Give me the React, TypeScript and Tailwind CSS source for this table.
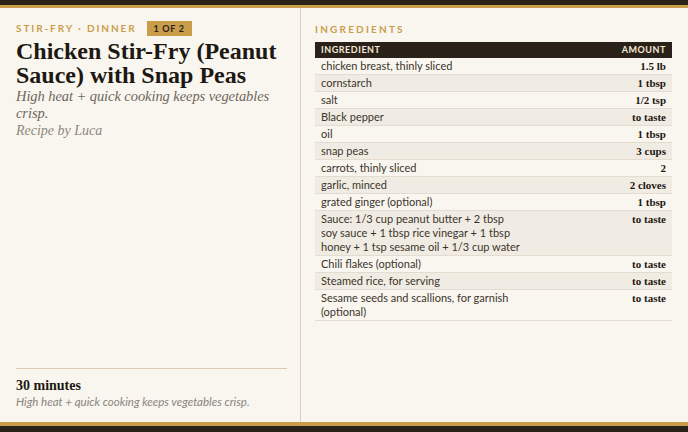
import React from 'react';

const ingredients: [string, string][] = [
  ['chicken breast, thinly sliced', '1.5 lb'],
  ['cornstarch', '1 tbsp'],
  ['salt', '1/2 tsp'],
  ['Black pepper', 'to taste'],
  ['oil', '1 tbsp'],
  ['snap peas', '3 cups'],
  ['carrots, thinly sliced', '2'],
  ['garlic, minced', '2 cloves'],
  ['grated ginger (optional)', '1 tbsp'],
  [
    'Sauce: 1/3 cup peanut butter + 2 tbsp soy sauce + 1 tbsp rice vinegar + 1 tbsp honey + 1 tsp sesame oil + 1/3 cup water',
    'to taste',
  ],
  ['Chili flakes (optional)', 'to taste'],
  ['Steamed rice, for serving', 'to taste'],
  ['Sesame seeds and scallions, for garnish (optional)', 'to taste'],
];

const serif = "font-['Liberation_Serif',serif]";
const sans = "font-['Lato',sans-serif]";

export default function App() {
  return (
    <div className="w-[688px] h-[432px] flex flex-col bg-[#f9f6f0] overflow-hidden">

      {/* TOP BARS */}
      <div className="h-[5px] bg-[#2a2118]" />
      <div className="h-[3px] bg-[#c99d4a]" />

      <div className="flex-1 flex min-h-0">

        {/* LEFT */}
        <div className="w-[301px] border-r border-[#d9d0c1] pl-4 pr-[13px] pt-[13px] pb-[13px] flex flex-col justify-between">

          <div>
            <div className="flex items-center gap-[10px]">
              <span className={`${sans} text-[10px] font-bold tracking-[0.19em] text-[#c99d4a]`}>
                STIR-FRY · DINNER
              </span>
              <span className={`${sans} bg-[#c99d4a] text-[#2a2118] text-[9px] font-bold tracking-[0.08em] px-[7px] h-[15px] flex items-center`}>
                1 OF 2
              </span>
            </div>

            <h1 className={`${serif} mt-[3px] text-[24px] leading-[24px] font-bold text-[#1d1812]`}>
              Chicken Stir-Fry (Peanut Sauce) with Snap Peas
            </h1>

            <p className={`${serif} italic text-[14.5px] leading-[17px] text-[#6e665b] mt-[1px] tracking-[-0.005em]`}>
              High heat + quick cooking keeps vegetables crisp.
            </p>

            <p className={`${serif} italic text-[14px] leading-[16px] text-[#8e867a] mt-[1px]`}>
              Recipe by Luca
            </p>
          </div>

          <div className="border-t border-[#d9cbb0] pt-[9px]">
            <div className={`${serif} text-[14px] leading-[16px] font-bold text-[#1d1812]`}>
              30 minutes
            </div>
            <div className={`${sans} italic text-[11.5px] leading-[15px] text-[#8a847c]`}>
              High heat + quick cooking keeps vegetables crisp.
            </div>
          </div>

        </div>

        {/* RIGHT */}
        <div className="flex-1 pl-[14px] pr-4 pt-[15px]">

          <div className={`${sans} text-[10px] font-bold tracking-[0.22em] text-[#c99d4a] leading-[12px]`}>
            INGREDIENTS
          </div>

          <div className="mt-[7px]">

            <div className={`${sans} h-4 bg-[#2a2118] text-[#f3ead8] text-[9px] font-bold tracking-[0.06em] flex items-center justify-between px-[6px]`}>
              <span>INGREDIENT</span>
              <span>AMOUNT</span>
            </div>

            {ingredients.map(([name, amount], i) => (
              <div
                key={i}
                className={`grid grid-cols-[200px_1fr] border-b border-[#e4dccf] px-[6px] py-[1px] ${
                  i % 2 === 1 ? 'bg-[#f1ece3]' : ''
                }`}
              >
                <span className={`${sans} text-[11px] leading-[14px] text-[#3b342b]`}>
                  {name}
                </span>
                <span className={`${serif} text-right text-[11px] leading-[14px] font-bold text-[#1d1812]`}>
                  {amount}
                </span>
              </div>
            ))}

          </div>

        </div>

      </div>

      {/* BOTTOM BARS */}
      <div className="h-[4px] bg-[#c99d4a]" />
      <div className="h-[6px] bg-[#2a2118]" />

    </div>
  );
}
